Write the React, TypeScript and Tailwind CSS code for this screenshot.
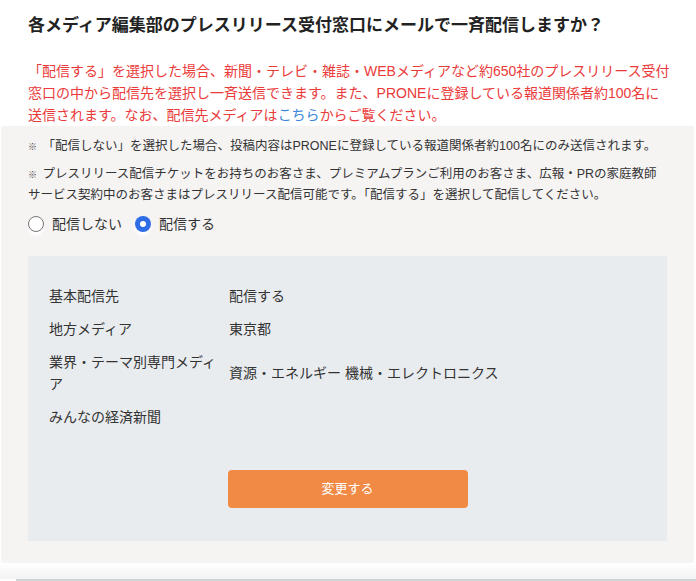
import React from "react";

const rows: { label: string; value: string }[] = [
  { label: "基本配信先", value: "配信する" },
  { label: "地方メディア", value: "東京都" },
  { label: "業界・テーマ別専門メディア", value: "資源・エネルギー 機械・エレクトロニクス" },
  { label: "みんなの経済新聞", value: "" },
];

export default function App() {
  return (
    <div className="w-[696px] h-[581px] overflow-hidden bg-white font-['Liberation_Sans','Noto_Sans_CJK_JP',sans-serif] text-[#333]">
      {/* 見出し + 注意文 */}
      <div className="px-[28px] pt-[14px]">
        <h2 className="text-[17px] leading-[24px] font-bold text-[#222]">
          各メディア編集部のプレスリリース受付窓口にメールで一斉配信しますか？
        </h2>
        <p className="mt-[22px] text-[14px] leading-[22px] text-[#ea3a3a] whitespace-nowrap">
          「配信する」を選択した場合、新聞・テレビ・雑誌・WEBメディアなど約650社のプレスリリース受付
          <br />
          窓口の中から配信先を選択し一斉送信できます。また、PRONEに登録している報道関係者約100名に
          <br />
          送信されます。なお、配信先メディアは<a className="text-[#3b87d9]">こちら</a>からご覧ください。
        </p>
      </div>

      {/* グレーのエリア */}
      <div className="mr-[2px] ml-[1px] rounded-b-[3px] bg-[#f6f3f3] px-[27px] pt-[10px] pb-[22px]">
        <p className="text-[12.5px] leading-[20px] whitespace-nowrap">
          <span className="text-[9px] mr-[2px] text-[#444]">※</span> 「配信しない」を選択した場合、投稿内容はPRONEに登録している報道関係者約100名にのみ送信されます。
        </p>
        <p className="mt-[7px] text-[12.5px] leading-[20px] whitespace-nowrap">
          <span className="text-[9px] mr-[2px] text-[#444]">※</span> プレスリリース配信チケットをお持ちのお客さま、プレミアムプランご利用のお客さま、広報・PRの家庭教師
          <br />
          サービス契約中のお客さまはプレスリリース配信可能です。「配信する」を選択して配信してください。
        </p>

        <div className="mt-[9px] flex items-center text-[14px] leading-[20px]">
          <label className="flex items-center">
            <span className="h-[16px] w-[16px] rounded-full border border-[#767676] bg-white shadow-[0_4px_3px_rgba(255,255,255,0.9)]" />
            <span className="ml-[8px]">配信しない</span>
          </label>
          <label className="ml-[13px] flex items-center">
            <span className="flex h-[16px] w-[16px] items-center justify-center rounded-full bg-[#2f6de6] shadow-[0_4px_3px_rgba(255,255,255,0.9)]">
              <span className="h-[6px] w-[6px] rounded-full bg-white" />
            </span>
            <span className="ml-[8px]">配信する</span>
          </label>
        </div>

        <div className="mt-[22px] bg-[#e9ecef] px-[21px] pt-[29px] pb-[33px] text-[14px] leading-[22px]">
          <div className="flex flex-col gap-[11px]">
            {rows.map((r) => (
              <div key={r.label} className="flex items-center">
                <div className="w-[180px] shrink-0 pr-[8px]">{r.label}</div>
                <div>{r.value}</div>
              </div>
            ))}
          </div>
          <div className="mt-[42px] flex justify-center">
            <button className="h-[38px] w-[240px] rounded-[4px] bg-[#f08a45] text-[13px] text-white">
              変更する
            </button>
          </div>
        </div>
      </div>

      {/* 下端 */}
      <div className="h-[16px] bg-gradient-to-b from-white to-[#f3f3f3]" />
      <div className="ml-[16px] h-[3px] bg-[#cfd5d5]" />
    </div>
  );
}
